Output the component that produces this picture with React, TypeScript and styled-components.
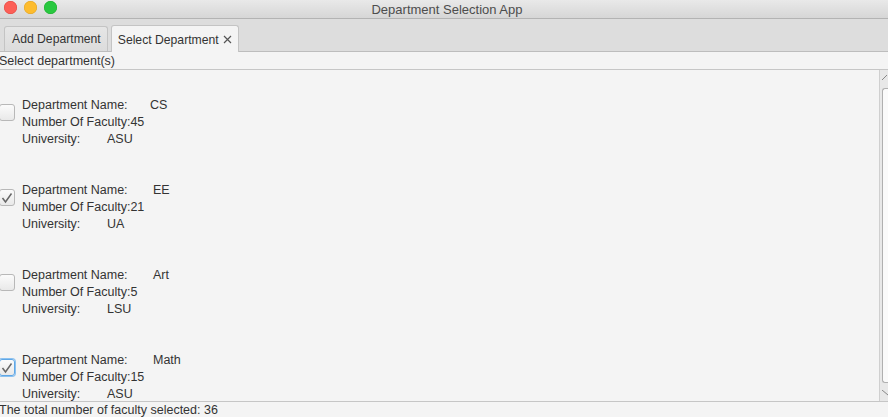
import React from "react";
import styled, { createGlobalStyle } from "styled-components";

const GlobalStyle = createGlobalStyle`
  html, body {
    margin: 0;
    padding: 0;
    background: #f4f4f4;
  }
  body {
    font-family: "Liberation Sans", Arial, sans-serif;
  }
`;

const Window = styled.div`
  width: 888px;
  height: 417px;
  display: flex;
  flex-direction: column;
  overflow: hidden;
  background: #f4f4f4;
  color: #333;
  font-size: 12px;
`;

const TitleBar = styled.div`
  height: 18px;
  flex: none;
  position: relative;
  display: flex;
  align-items: center;
  justify-content: center;
  padding-left: 6px;
  background: linear-gradient(#e9e9e9, #d6d6d6);
  border-bottom: 1px solid #b3b3b3;
  color: #4d4d4d;
  font-size: 13px;
`;

const Lights = styled.div`
  position: absolute;
  left: 4px;
  top: 1px;
  display: flex;
  gap: 7px;
`;

const Light = styled.span<{ $c: string; $b: string }>`
  width: 13px;
  height: 13px;
  border-radius: 50%;
  background: ${(p) => p.$c};
  box-shadow: inset 0 0 0 0.5px ${(p) => p.$b};
`;

const TabHeader = styled.div`
  height: 32px;
  flex: none;
  display: flex;
  align-items: flex-end;
  gap: 3px;
  padding-left: 4px;
  background: #dddddd;
  border-bottom: 1px solid #bdbdbd;
`;

const Tab = styled.div<{ $active?: boolean }>`
  height: ${(p) => (p.$active ? 27 : 25)}px;
  box-sizing: border-box;
  display: flex;
  align-items: center;
  gap: 4px;
  padding: ${(p) => (p.$active ? "1px 6px 0 6px" : "0 6px 0 7px")};
  border: 1px solid #c4c4c4;
  border-bottom: none;
  border-radius: 3px 3px 0 0;
  background: ${(p) => (p.$active ? "#f4f4f4" : "linear-gradient(#e6e6e6, #dcdcdc)")};
  margin-bottom: ${(p) => (p.$active ? -1 : 0)}px;
  color: #333;
  font-size: 12.2px;
`;

const SectionLabel = styled.div`
  height: 17px;
  flex: none;
  display: flex;
  align-items: center;
  margin-left: -1px;
  border-bottom: 1px solid #c6c6c6;
  font-size: 12.5px;
`;

const ScrollArea = styled.div`
  flex: 1;
  display: flex;
  min-height: 0;
  border-bottom: 1px solid #c6c6c6;
`;

const List = styled.div`
  flex: 1;
  display: flex;
  flex-direction: column;
  gap: 34px;
  padding-top: 27px;
  overflow: hidden;
`;

const Item = styled.div`
  display: flex;
  align-items: flex-start;
  gap: 7px;
`;

const Check = styled.span<{ $focus?: boolean }>`
  width: 16px;
  height: 17px;
  margin-top: 7px;
  margin-left: -1px;
  flex: none;
  box-sizing: border-box;
  border-radius: 3px;
  border: 1px solid ${(p) => (p.$focus ? "#5fa7e6" : "#b8b8b8")};
  box-shadow: ${(p) => (p.$focus ? "0 0 0 1px #8cc1ef" : "none")};
  background: linear-gradient(#fbfbfb, #e9e9e9);
  display: flex;
  align-items: center;
  justify-content: center;
`;

const Info = styled.div`
  display: flex;
  flex-direction: column;
  line-height: 17px;
  font-size: 12.5px;
`;

const Line = styled.div`
  display: flex;
`;

const Label = styled.span<{ $w?: number }>`
  width: ${(p) => (p.$w ? `${p.$w}px` : "auto")};
`;

const ScrollBar = styled.div`
  width: 8px;
  flex: none;
  display: flex;
  flex-direction: column;
  align-items: flex-end;
  background: #e8e8e8;
  border-left: 1px solid #cfcfcf;
`;

const Arrow = styled.div`
  height: 16px;
  width: 6px;
  display: flex;
  align-items: center;
  justify-content: center;
`;

const Thumb = styled.div`
  flex: 1;
  width: 5px;
  margin: 2px 0;
  border: 1px solid #b0b0b0;
  border-right: none;
  border-radius: 3px 0 0 3px;
  background: #fafafa;
`;

const Status = styled.div`
  height: 15px;
  flex: none;
  display: flex;
  align-items: center;
  margin-left: -1px;
  font-size: 12.5px;
`;

const departments = [
  { name: "CS", faculty: 45, uni: "ASU", checked: false },
  { name: "EE", faculty: 21, uni: "UA", checked: true },
  { name: "Art", faculty: 5, uni: "LSU", checked: false },
  { name: "Math", faculty: 15, uni: "ASU", checked: true, focus: true },
];

const CheckMark = () => (
  <svg width="12" height="12" viewBox="0 0 12 12">
    <path d="M1.5 6 L4.5 10 L10.5 1.5" fill="none" stroke="#666" strokeWidth="1.5" />
  </svg>
);

const CloseIcon = () => (
  <svg width="9" height="9" viewBox="0 0 9 9">
    <path d="M1 1 L8 8 M8 1 L1 8" stroke="#555" strokeWidth="1.2" />
  </svg>
);

const App: React.FC = () => {
  const total = departments.filter((d) => d.checked).reduce((s, d) => s + d.faculty, 0);
  return (
    <Window>
      <GlobalStyle />
      <TitleBar>
        <Lights>
          <Light $c="#fc5f57" $b="#e0443e" />
          <Light $c="#fdbc2e" $b="#dea123" />
          <Light $c="#29c840" $b="#1aab29" />
        </Lights>
        Department Selection App
      </TitleBar>
      <TabHeader>
        <Tab>Add Department</Tab>
        <Tab $active>
          Select Department
          <CloseIcon />
        </Tab>
      </TabHeader>
      <SectionLabel>Select department(s)</SectionLabel>
      <ScrollArea>
        <List>
          {departments.map((d) => (
            <Item key={d.name}>
              <Check $focus={d.focus}>{d.checked && <CheckMark />}</Check>
              <Info>
                <Line>
                  <Label $w={d.name === "CS" ? 128 : 131}>Department Name:</Label>
                  <span>{d.name}</span>
                </Line>
                <Line>
                  <Label>Number Of Faculty:</Label>
                  <span>{d.faculty}</span>
                </Line>
                <Line>
                  <Label $w={85}>University:</Label>
                  <span>{d.uni}</span>
                </Line>
              </Info>
            </Item>
          ))}
        </List>
        <ScrollBar>
          <Arrow>
            <svg width="6" height="6" viewBox="0 0 6 6">
              <path d="M0 5 L5 0" stroke="#888" strokeWidth="1" />
            </svg>
          </Arrow>
          <Thumb />
          <Arrow>
            <svg width="6" height="6" viewBox="0 0 6 6">
              <path d="M0 0 L6 5" stroke="#888" strokeWidth="1" />
            </svg>
          </Arrow>
        </ScrollBar>
      </ScrollArea>
      <Status>The total number of faculty selected: {total}</Status>
    </Window>
  );
};

export default App;
